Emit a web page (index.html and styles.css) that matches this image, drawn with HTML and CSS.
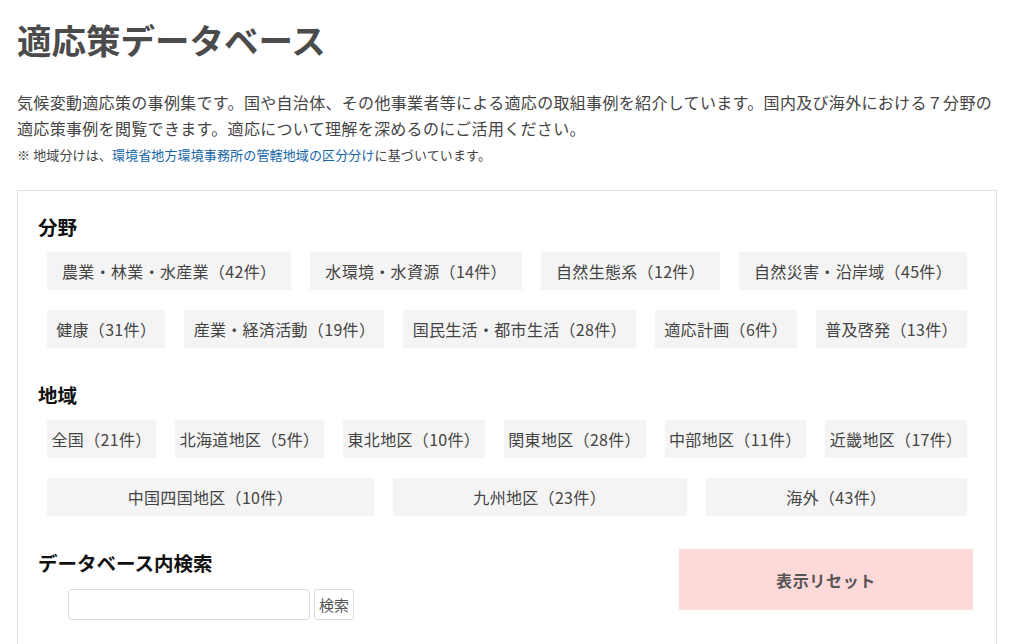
FILE: index.html
```html
<html>
<head>
    <meta charset="utf-8">
    <link rel="stylesheet" href="styles.css">
    <title>適応策データベース</title>
</head>
<body>
<div class="page">
    <h1 class="page_title">適応策データベース</h1>

    <p class="lead">気候変動適応策の事例集です。国や自治体、その他事業者等による適応の取組事例を紹介しています。国内及び海外における７分野の適応策事例を閲覧できます。適応について理解を深めるのにご活用ください。</p>
    <p class="note">※ 地域分けは、<a href="#">環境省地方環境事務所の管轄地域の区分分け</a>に基づいています。</p>

    <div class="filter_box">
        <!--分野-->
        <h2 class="filter_title">分野</h2>
        <ul class="chips">
            <li class="chip">農業・林業・水産業（42件）</li>
            <li class="chip">水環境・水資源（14件）</li>
            <li class="chip">自然生態系（12件）</li>
            <li class="chip">自然災害・沿岸域（45件）</li>
            <li class="chip">健康（31件）</li>
            <li class="chip">産業・経済活動（19件）</li>
            <li class="chip">国民生活・都市生活（28件）</li>
            <li class="chip">適応計画（6件）</li>
            <li class="chip">普及啓発（13件）</li>
        </ul>

        <!--地域-->
        <h2 class="filter_title">地域</h2>
        <ul class="chips">
            <li class="chip">全国（21件）</li>
            <li class="chip">北海道地区（5件）</li>
            <li class="chip">東北地区（10件）</li>
            <li class="chip">関東地区（28件）</li>
            <li class="chip">中部地区（11件）</li>
            <li class="chip">近畿地区（17件）</li>
            <li class="chip">中国四国地区（10件）</li>
            <li class="chip">九州地区（23件）</li>
            <li class="chip">海外（43件）</li>
        </ul>

        <div class="tools">
            <div class="search">
                <h2 class="filter_title">データベース内検索</h2>
                <form class="search_form">
                    <input type="text" class="search_input" name="keyword">
                    <button type="button" class="search_btn">検索</button>
                </form>
            </div>
            <button type="button" class="reset_btn">表示リセット</button>
        </div>
    </div>
</div>
</body>
</html>
```

FILE: styles.css
```css
body {
    margin: 0;
    background-color: #fff;
    color: #444;
    font-family: "Noto Sans CJK JP", "Noto Sans", sans-serif;
}

.page {
    width: 980px;
    margin-left: 17px;
}

.page_title {
    margin: 15px 0 0;
    font-size: 34.5px;
    line-height: 48px;
    font-weight: bold;
    color: #4b4b4b;
}

.lead {
    margin: 26px 0 0;
    font-size: 16px;
    line-height: 26px;
    letter-spacing: 0.02em;
}

.note {
    margin: 4px 0 0;
    font-size: 13px;
    line-height: 20px;
    letter-spacing: 0.01em;
}

.note a {
    color: #1565a8;
    text-decoration: none;
}

/* filter panel */
.filter_box {
    margin-top: 25px;
    border: 1px solid #e0e0e0;
    padding: 24px 29px 60px 20px;
}

.filter_title {
    margin: 0;
    font-size: 19.5px;
    line-height: 24px;
    font-weight: bold;
    color: #111;
}

.chips {
    list-style: none;
    margin: 13px 0 35px 9px;
    padding: 0;
    display: flex;
    flex-wrap: wrap;
    gap: 20px 19px;
}

.chip {
    flex: 1 1 auto;
    height: 38px;
    line-height: 38px;
    padding: 0 3px;
    text-align: center;
    background-color: #f4f4f4;
    font-size: 16px;
    letter-spacing: 0.02em;
    color: #444;
    white-space: nowrap;
}

.tools {
    display: flex;
    justify-content: space-between;
    align-items: flex-start;
    margin: -2px -6px 0 0;
}

.search .filter_title {
    margin-top: 2px;
}

.search_form {
    margin: 14px 0 0 30px;
    display: flex;
    gap: 4px;
}

.search_input {
    width: 242px;
    height: 31px;
    box-sizing: border-box;
    border: 1px solid #dcdcdc;
    border-radius: 4px;
    padding: 0 6px;
    font-size: 15px;
}

.search_btn {
    width: 40px;
    height: 31px;
    box-sizing: border-box;
    border: 1px solid #dcdcdc;
    border-radius: 3px;
    background-color: #fff;
    color: #555;
    font-family: "Noto Sans CJK JP", sans-serif;
    font-size: 15px;
    padding: 0;
}

.reset_btn {
    width: 294px;
    height: 61px;
    border: none;
    background-color: #fdd9d9;
    color: #555;
    font-family: "Noto Sans CJK JP", sans-serif;
    font-size: 16px;
    font-weight: bold;
    letter-spacing: 0.04em;
}
```
